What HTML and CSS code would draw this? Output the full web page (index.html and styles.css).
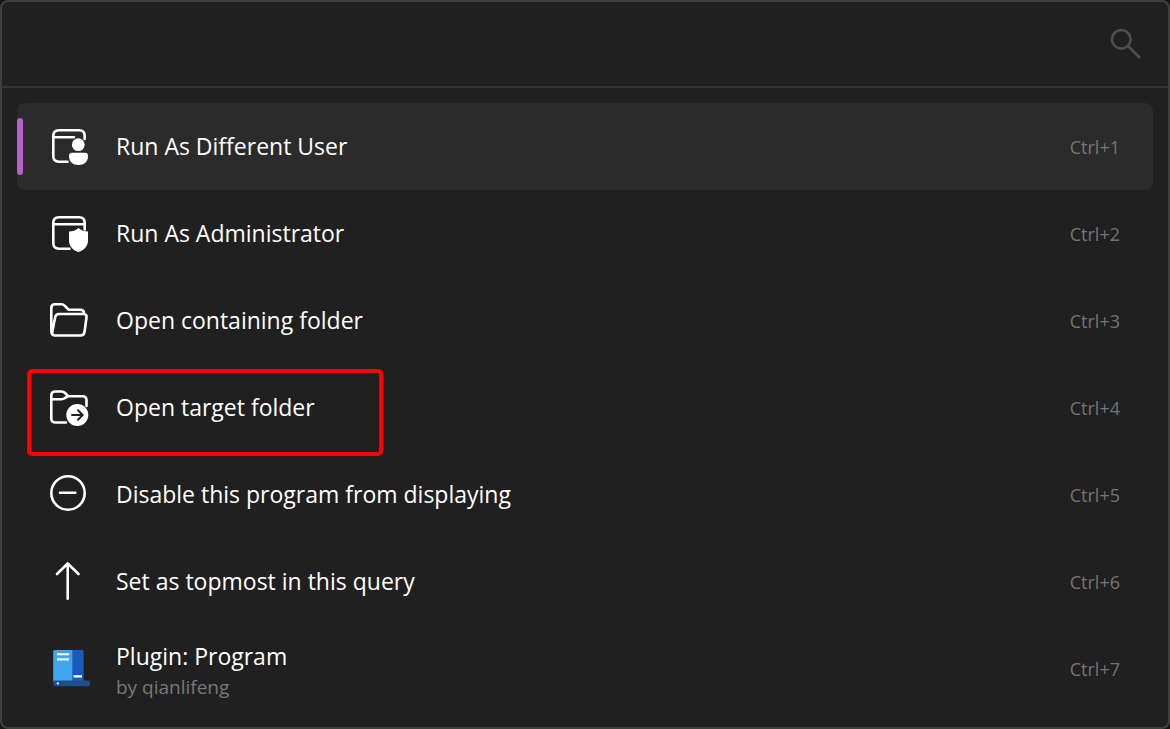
FILE: index.html
```html
<!DOCTYPE html>
<html lang="en">
<head>
<meta charset="utf-8">
<title>Launcher</title>
<link rel="stylesheet" href="styles.css">
</head>
<body>
<main class="launcher">
  <form class="search" role="search">
    <input class="search-input" type="text" aria-label="Search" autocomplete="off">
    <svg class="search-icon" viewBox="0 0 32 32" aria-hidden="true"><circle cx="12.3" cy="12.3" r="9.3"/><path d="M19 19 31 31"/></svg>
  </form>
  <ul class="results">
    <li class="item">
      <button class="row selected" type="button">
        <svg class="icon" viewBox="0 0 44 43" aria-hidden="true"><path d="M19.5 36.7H11Q5.3 36.7 5.3 31V11Q5.3 5.3 11 5.3H31Q36.7 5.3 36.7 11V14M5.3 12.3H26"/><circle class="solid" cx="30.3" cy="19.7" r="6.4"/><path class="solid" d="M24 27.7H37Q40 27.7 40 31C40 37 36 40 30.500 40S21 37 21 31Q21 27.700 24 27.700Z"/></svg>
        <span class="label"><span class="title">Run As Different User</span></span>
        <kbd class="key">Ctrl+1</kbd>
      </button>
    </li>
    <li class="item">
      <button class="row" type="button">
        <svg class="icon" viewBox="0 0 44 43" aria-hidden="true"><path d="M21.500 36.7H11Q5.3 36.7 5.3 31V11Q5.3 5.3 11 5.3H31Q36.7 5.3 36.7 11V17.500M5.3 12.300H36.7"/><path class="solid" d="M30.500 16Q34.500 19.500 40 19.500V28C40 34 36.500 38 30.500 40C24.500 38 21 34 21 28V19.500Q26.500 19.500 30.500 16Z"/></svg>
        <span class="label"><span class="title">Run As Administrator</span></span>
        <kbd class="key">Ctrl+2</kbd>
      </button>
    </li>
    <li class="item">
      <button class="row" type="button">
        <svg class="icon" viewBox="0 0 44 43" aria-hidden="true"><path d="M4.500 35.500Q3.300 34.300 3.300 32V9Q3.300 5.300 7 5.300H13.500Q15.500 5.300 17 7L20.500 10.700H32.500Q36 10.700 36 14.500M11 15H35.500Q39 15 38.500 18.500L36.500 33Q36 36.500 32.500 36.500H7Q3.700 36.500 4.300 33L7.200 18Q7.800 15 11 15Z"/></svg>
        <span class="label"><span class="title">Open containing folder</span></span>
        <kbd class="key">Ctrl+3</kbd>
      </button>
    </li>
    <li class="item">
      <button class="row" type="button">
        <svg class="icon" viewBox="0 0 44 43" aria-hidden="true"><path d="M18 36.500H7.500Q3.300 36.500 3.300 32.500V9.500Q3.300 5.500 7.500 5.500H13.500Q15.500 5.500 17 7L20.300 10.200H34.500Q38.500 10.200 38.500 14.200V20M3.300 13.200H13.500Q15.500 13.200 17 12L20.300 10.200"/><circle class="solid" cx="29.300" cy="29" r="11"/><path class="cutout" d="M24 29H34.500M30 24.300 34.700 29 30 33.700"/></svg>
        <span class="label"><span class="title">Open target folder</span></span>
        <kbd class="key">Ctrl+4</kbd>
      </button>
      <span class="highlight" aria-hidden="true"></span>
    </li>
    <li class="item">
      <button class="row" type="button">
        <svg class="icon" viewBox="0 0 44 43" aria-hidden="true"><circle cx="20" cy="20" r="16.700"/><path d="M12 19.700H27.300"/></svg>
        <span class="label"><span class="title">Disable this program from displaying</span></span>
        <kbd class="key">Ctrl+5</kbd>
      </button>
    </li>
    <li class="item">
      <button class="row" type="button">
        <svg class="icon" viewBox="0 0 44 43" aria-hidden="true"><path d="M19.700 3.500V38.700M9 14 19.700 3.500 30.500 14"/></svg>
        <span class="label"><span class="title">Set as topmost in this query</span></span>
        <kbd class="key">Ctrl+6</kbd>
      </button>
    </li>
    <li class="item">
      <button class="row" type="button">
        <svg class="icon plugin" viewBox="0 0 44 43" aria-hidden="true"><rect x="5.300" y="3" width="30.400" height="34" rx="1.500" fill="#185abd"/><path fill="#41a5ee" d="M6.800 3H24.300V34H5.300V4.500Q5.300 3 6.800 3Z"/><path fill="#1b4f86" d="M5.600 33.400H40.500Q42 33.400 42 35V37.800Q42 39.300 40.500 39.300H7.300Q5.600 39.300 5.600 37.600Z"/><path fill="#fff" d="M9 6.200H21V8.300H9ZM9 11.300H21V13.400H9ZM25.500 28.300H34V30.400H25.500Z"/><circle cx="9.800" cy="36.400" r="1.100" fill="#fff"/></svg>
        <span class="label"><span class="title">Plugin: Program</span><span class="subtitle">by qianlifeng</span></span>
        <kbd class="key">Ctrl+7</kbd>
      </button>
    </li>
  </ul>
</main>
</body>
</html>
```
FILE: styles.css
```css
* {
  box-sizing: border-box;
}

body {
  margin: 0;
  background: #151515;
  color: #fff;
  font-family: "Segoe UI", "Open Sans", "Noto Sans", sans-serif;
}

.launcher {
  min-height: 100vh;
  border: 2px solid #3f3f3f;
  border-radius: 8px;
  background: #202020;
}

.search {
  display: flex;
  align-items: center;
  height: 86px;
  padding: 0 27px 2px 32px;
  border-bottom: 2px solid #353535;
}

.search-input {
  flex: 1;
  min-width: 0;
  height: 56px;
  padding: 0;
  border: 0;
  outline: 0;
  background: transparent;
  color: inherit;
  font: inherit;
  font-size: 28px;
}

.search-icon {
  width: 32px;
  height: 32px;
  fill: none;
  stroke: #4d4d4d;
  stroke-width: 2.6;
}

.results {
  margin: 0;
  padding: 15px;
  list-style: none;
}

.item {
  position: relative;
}

.row {
  position: relative;
  display: flex;
  align-items: center;
  gap: 24px;
  width: 100%;
  height: 87px;
  padding: 0 33px 0 31px;
  border: 0;
  border-radius: 8px;
  background: transparent;
  color: inherit;
  font: inherit;
  text-align: left;
}

.selected {
  background: #2b2b2b;
}

.selected::before {
  content: "";
  position: absolute;
  top: 15px;
  bottom: 15px;
  left: 0;
  width: 6px;
  border-radius: 3px;
  background: #b860cc;
}

.icon {
  flex: none;
  width: 44px;
  height: 43px;
  fill: none;
  stroke: #fff;
  stroke-width: 2.6;
  stroke-linecap: round;
  stroke-linejoin: round;
}

.solid {
  fill: #fff;
  stroke: none;
}

.cutout {
  stroke: #202020;
  stroke-width: 2;
}

.plugin {
  stroke: none;
}

.label {
  display: flex;
  flex: 1;
  flex-direction: column;
  gap: 6px;
  min-width: 0;
  padding-bottom: 2px;
}

.title {
  font-size: 23px;
  line-height: 32px;
}

.subtitle {
  color: #787878;
  font-size: 19px;
  line-height: 18px;
}

.key {
  color: #747474;
  font-family: inherit;
  font-size: 18px;
}

.highlight {
  position: absolute;
  top: 5px;
  left: 10px;
  width: 356px;
  height: 87px;
  border: 4px solid #f00;
  border-radius: 5px;
  pointer-events: none;
}
```
